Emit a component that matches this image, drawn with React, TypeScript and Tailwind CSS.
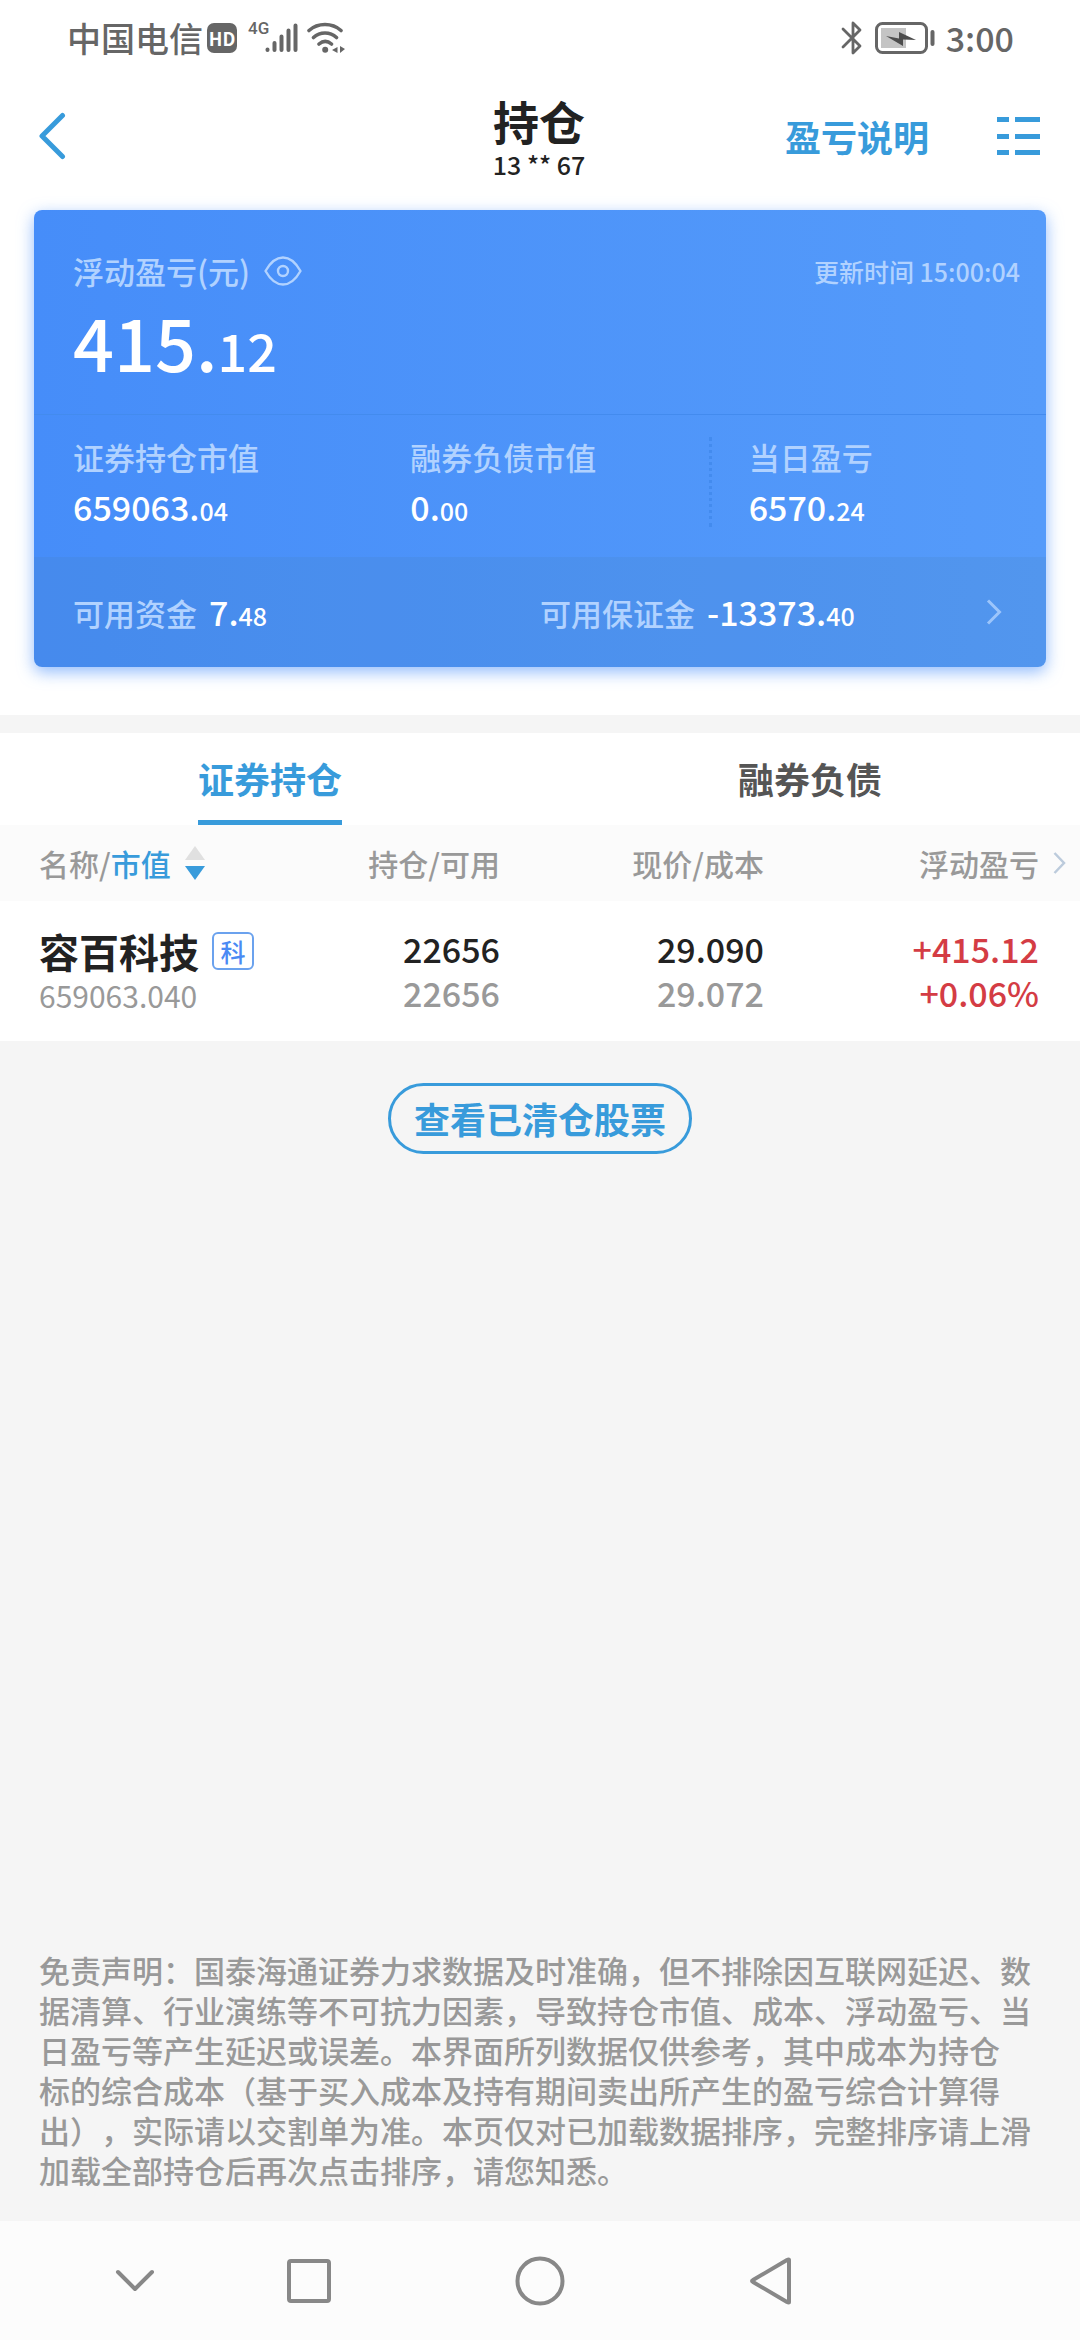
import React, { useState } from "react";

interface Holding {
  name: string;
  tag: string;
  marketValue: string;
  amount: string;
  available: string;
  price: string;
  cost: string;
  profit: string;
  profitRate: string;
}

const holdings: Holding[] = [
  {
    name: "容百科技",
    tag: "科",
    marketValue: "659063.040",
    amount: "22656",
    available: "22656",
    price: "29.090",
    cost: "29.072",
    profit: "+415.12",
    profitRate: "+0.06%",
  },
];

const summary = [
  { label: "证券持仓市值", value: "659063.04" },
  { label: "融券负债市值", value: "0.00" },
  { label: "当日盈亏", value: "6570.24" },
];

// Integer part large, decimals small
const Money: React.FC<{ value: string }> = ({ value }) => {
  const [whole, cents] = value.split(".");
  return (
    <span className="text-[34px] leading-10 font-medium text-white">
      {whole}.<span className="text-[25px] leading-none">{cents}</span>
    </span>
  );
};

const StatusBar: React.FC = () => (
  <div className="flex h-[76px] items-center justify-between pr-[66px] pl-[67px] text-[#666]">
    <div className="flex items-center">
      <span className="text-[34px] leading-10 font-medium">中国电信</span>
      <span className="ml-1 flex h-[30px] w-[30px] items-center justify-center rounded-[7px] bg-[#666] text-[18px] leading-none font-bold text-white">
        HD
      </span>
      <span className="mb-5 ml-[11px] font-['Roboto'] text-[17px] leading-none font-medium">4G</span>
      <svg className="-ml-1 h-[32px] w-[34px]" viewBox="0 0 34 32" fill="none" stroke="currentColor" strokeWidth="4" strokeLinecap="round">
        <path d="M2.500 27.500v.5M9.500 21v7M16.500 14.500V28M23.500 8.500V28M30.500 3.500V28" />
      </svg>
      <svg className="ml-2 h-[32px] w-[38px]" viewBox="0 0 38 32" fill="none" stroke="currentColor" strokeWidth="3.600" strokeLinecap="round">
        <path d="M2 8.500C11 .5 25 .5 34 8.500M6.500 15.500c6.500-6 16.500-6 23 0M12 22c4-3.400 8.500-3.400 12.500 0" />
        <circle cx="18.200" cy="27.800" r="3" fill="currentColor" stroke="none" />
        <path d="M30.500 25v6l-5.500-3zM33 24v7l5-4z" fill="currentColor" stroke="none" />
      </svg>
    </div>
    <div className="flex items-center">
      <svg className="h-[34px] w-[22px]" viewBox="0 0 22 34" fill="none" stroke="currentColor" strokeWidth="2.800" strokeLinejoin="round" strokeLinecap="round">
        <path d="M2 8l17 17-7 7V2l7 7L2 26" />
      </svg>
      <svg className="ml-[12px] h-[34px] w-[62px]" viewBox="0 0 62 34" fill="none">
        <rect x="1.500" y="2.500" width="50" height="29" rx="6" stroke="currentColor" strokeWidth="3" />
        <rect x="6" y="7" width="25" height="20" fill="#c4c4c4" />
        <path d="M11 15l13 2.500V11l17 8-13-.5V25z" fill="#4d4d4d" />
        <path d="M57.500 11v12" stroke="currentColor" strokeWidth="4" strokeLinecap="round" />
      </svg>
      <span className="ml-[9px] text-[34px] leading-10 font-medium">3:00</span>
    </div>
  </div>
);

const App: React.FC = () => {
  const [tab, setTab] = useState<"long" | "short">("long");

  return (
    <div className="flex min-h-screen flex-col bg-[#f5f5f5] font-['Noto_Sans_CJK_SC','Noto_Sans',sans-serif] text-[#222]">
      <div className="bg-white pb-12">
        <StatusBar />

        <header className="grid h-[120px] grid-cols-[1fr_auto_1fr] items-center pr-10 pl-[38px] text-[#389bdb]">
          <button aria-label="返回" className="justify-self-start">
            <svg className="h-[48px] w-[28px]" viewBox="0 0 28 48" fill="none" stroke="currentColor" strokeWidth="5" strokeLinecap="round" strokeLinejoin="round">
              <path d="M24.500 3.500L4 24l20.500 20.500" />
            </svg>
          </button>
          <div className="text-center text-[#222]">
            <h1 className="text-[46px] leading-[56px] font-bold">持仓</h1>
            <div className="text-[25px] leading-8 font-medium">13 ** 67</div>
          </div>
          <div className="flex items-center gap-[68px] justify-self-end">
            <a href="#help" className="text-[36px] leading-10 font-bold">盈亏说明</a>
            <button aria-label="菜单">
              <svg className="h-[40px] w-[43px]" viewBox="0 0 43 40" fill="currentColor">
                <path d="M0 1h12v5H0zM18 1h25v5H18zM0 18h12v5H0zM18 18h25v5H18zM0 34h12v5H0zM18 34h25v5H18z" />
              </svg>
            </button>
          </div>
        </header>

        {/* Account summary */}
        <section className="mx-[34px] mt-3.5 rounded-lg bg-gradient-to-r from-[#468df9] to-[#559bfa] shadow-[0_5px_16px_rgba(74,144,250,0.6)]">
          <div className="border-b border-[#438bee] pt-[41px] pr-[26px] pb-[33px] pl-[39px]">
            <div className="flex items-center justify-between text-[#b1d2ff]">
              <div className="flex items-center gap-3.5">
                <span className="text-[31px] leading-10 font-medium">浮动盈亏(元)</span>
                <button aria-label="隐藏金额">
                  <svg className="h-[30px] w-[38px]" viewBox="0 0 38 30" fill="none" stroke="currentColor" strokeWidth="2.400">
                    <path d="M1.500 15C6 7 11 1.500 19 1.500S32 7 36.500 15C32 23 27 28.500 19 28.500S6 23 1.500 15z" strokeLinejoin="round" />
                    <circle cx="19" cy="15" r="5" />
                  </svg>
                </button>
              </div>
              <span className="text-[25px] leading-10 font-medium">更新时间 15:00:04</span>
            </div>
            <div className="mt-2.5 text-[72px] leading-20 font-medium text-white">
              415.<span className="text-[52px] leading-none">12</span>
            </div>
          </div>

          <div className="grid grid-cols-3 pt-[22px] pb-[30px]">
            {summary.map((item, index) => (
              <div
                key={item.label}
                className={`flex flex-col gap-2.5 ${index === 2 ? "border-l-3 border-dotted border-[#438bee] pl-[37px]" : "pl-[39px]"}`}
              >
                <span className="text-[31px] leading-10 font-medium text-[#b1d2ff]">{item.label}</span>
                <Money value={item.value} />
              </div>
            ))}
          </div>

          <button className="relative grid h-[110px] w-full grid-cols-2 items-center rounded-b-lg bg-[#4680c0]/20 text-left">
            <span className="flex items-baseline gap-3 pl-[39px]">
              <span className="text-[31px] leading-10 font-medium text-[#b1d2ff]">可用资金</span>
              <Money value="7.48" />
            </span>
            <span className="flex items-baseline gap-3">
              <span className="text-[31px] leading-10 font-medium text-[#b1d2ff]">可用保证金</span>
              <Money value="-13373.40" />
            </span>
            <svg className="absolute right-[44px] h-[26px] w-[16px] text-[#9cc5fb]" viewBox="0 0 16 26" fill="none" stroke="currentColor" strokeWidth="3">
              <path d="M2 1.500L13.500 13 2 24.500" />
            </svg>
          </button>
        </section>
      </div>

      {/* Holdings */}
      <div className="mt-[18px] bg-white">
        <div role="tablist" className="grid grid-cols-2 text-[36px] leading-[56px] font-bold">
          <button role="tab" aria-selected={tab === "long"} onClick={() => setTab("long")}>
            <span className={`inline-block border-b-5 pt-[17px] pb-3.5 align-top ${tab === "long" ? "border-[#389bdb] text-[#389bdb]" : "border-transparent text-[#555]"}`}>
              证券持仓
            </span>
          </button>
          <button role="tab" aria-selected={tab === "short"} onClick={() => setTab("short")}>
            <span className={`inline-block border-b-5 pt-[17px] pb-3.5 align-top ${tab === "short" ? "border-[#389bdb] text-[#389bdb]" : "border-transparent text-[#555]"}`}>
              融券负债
            </span>
          </button>
        </div>

        <table className="w-full table-fixed text-right">
          <thead className="bg-[#fbfbfb] text-[30px] leading-10 text-[#999]">
            <tr className="h-[76px]">
              <th className="pl-[39px] text-left font-medium">
                <button className="flex items-center">
                  名称/<span className="text-[#389bdb]">市值</span>
                  <svg className="ml-3.5 h-[34px] w-[20px]" viewBox="0 0 20 34">
                    <path d="M10 0l10 14H0z" fill="#e0e0e0" />
                    <path d="M0 20h20L10 34z" fill="#389bdb" />
                  </svg>
                </button>
              </th>
              <th className="w-[200px] font-medium">持仓/可用</th>
              <th className="w-[264px] font-medium">现价/成本</th>
              <th className="w-[316px] pr-[14px] font-medium">
                <button className="inline-flex items-center gap-3.5 align-top">
                  浮动盈亏
                  <svg className="h-[24px] w-[13px] text-[#bccbdc]" viewBox="0 0 13 24" fill="none" stroke="currentColor" strokeWidth="2.500">
                    <path d="M1.500 2L11 12 1.500 22" />
                  </svg>
                </button>
              </th>
            </tr>
          </thead>
          <tbody>
            {holdings.map((item) => (
              <tr key={item.name} className="h-[140px] text-[34px] leading-[44px] font-medium">
                <td className="pl-[39px] text-left">
                  <div className="flex items-center gap-[13px] text-[40px] leading-[48px] font-bold">
                    {item.name}
                    <span className="flex h-[38px] w-[42px] items-center justify-center rounded-md border-2 border-[#6ba2ee] text-[25px] leading-none font-medium text-[#4a8af4]">
                      {item.tag}
                    </span>
                  </div>
                  <div className="text-[30px] leading-10 font-normal text-[#999]">{item.marketValue}</div>
                </td>
                <td>
                  <div>{item.amount}</div>
                  <div className="text-[#999]">{item.available}</div>
                </td>
                <td>
                  <div>{item.price}</div>
                  <div className="text-[#999]">{item.cost}</div>
                </td>
                <td className="pr-[41px] text-[#d43c44]">
                  <div>{item.profit}</div>
                  <div>{item.profitRate}</div>
                </td>
              </tr>
            ))}
          </tbody>
        </table>
      </div>

      <button className="mt-[42px] self-center rounded-full border-3 border-[#389bdb] px-[23px] py-2 text-[36px] leading-[49px] font-bold text-[#389bdb]">
        查看已清仓股票
      </button>

      <p className="mt-auto px-[39px] pb-[31px] text-[31px] leading-10 font-medium text-[#999] [text-spacing-trim:space-all]">
        免责声明：国泰海通证券力求数据及时准确，但不排除因互联网延迟、数据清算、行业演练等不可抗力因素，导致持仓市值、成本、浮动盈亏、当日盈亏等产生延迟或误差。本界面所列数据仅供参考，其中成本为持仓
        <br />
        标的综合成本（基于买入成本及持有期间卖出所产生的盈亏综合计算得出），实际请以交割单为准。本页仅对已加载数据排序，完整排序请上滑加载全部持仓后再次点击排序，请您知悉。
      </p>

      {/* System navigation */}
      <nav className="grid h-[119px] grid-cols-[118fr_230fr_232fr_230fr] items-center justify-items-center bg-[#fcfcfc] pr-[194px] pl-[76px] text-[#888]">
        <button aria-label="收起">
          <svg className="h-[24px] w-[40px]" viewBox="0 0 40 24" fill="none" stroke="currentColor" strokeWidth="4" strokeLinecap="round" strokeLinejoin="round">
            <path d="M3 3l17 17L37 3" />
          </svg>
        </button>
        <button aria-label="最近任务">
          <svg className="h-[46px] w-[46px]" viewBox="0 0 46 46" fill="none" stroke="currentColor" strokeWidth="4">
            <rect x="3" y="3" width="40" height="40" rx="2" />
          </svg>
        </button>
        <button aria-label="主屏幕">
          <svg className="h-[50px] w-[50px]" viewBox="0 0 50 50" fill="none" stroke="currentColor" strokeWidth="4">
            <circle cx="25" cy="25" r="22.500" />
          </svg>
        </button>
        <button aria-label="后退">
          <svg className="h-[50px] w-[44px]" viewBox="0 0 44 50" fill="none" stroke="currentColor" strokeWidth="4" strokeLinejoin="round">
            <path d="M40 4v42q0 1-2 0L4 26q-2-1 0-2L38 4q2-1 2 0z" />
          </svg>
        </button>
      </nav>
    </div>
  );
};

export default App;
